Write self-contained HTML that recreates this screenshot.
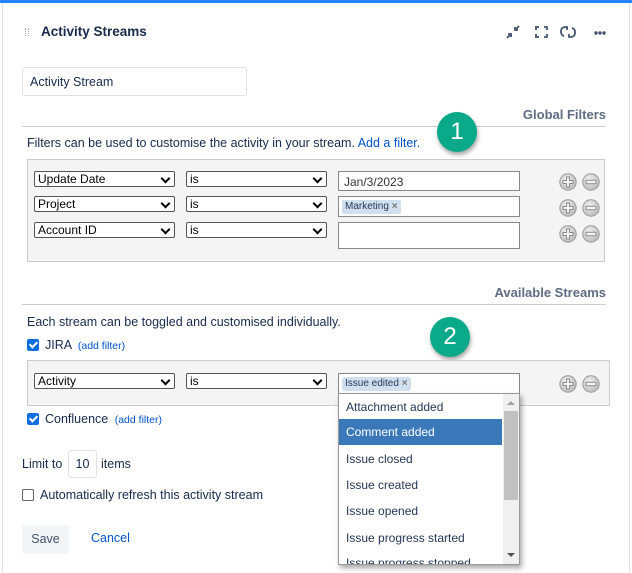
<!DOCTYPE html><html><head><style>
*{box-sizing:border-box;margin:0;padding:0}
body{width:632px;height:573px;background:#fff;font-family:"Liberation Sans",sans-serif;color:#172b4d;position:relative;overflow:hidden;font-size:12px}
.a{position:absolute;white-space:nowrap}
.sel{position:absolute;height:16px;border:1px solid #555;border-radius:2px;background:#fff;font-size:12px;line-height:14px;padding-left:3px;color:#000}
.sel:after{content:"";position:absolute;right:5px;top:3px;width:5px;height:5px;border-right:2px solid #000;border-bottom:2px solid #000;transform:rotate(45deg)}
.inp{position:absolute;border:1px solid #888;background:#fff}
.pm{position:absolute}
.tag{position:absolute;background:#d1e0ef;border-radius:2px;font-size:10px;color:#253858;padding:1px 3px;line-height:12px}
.badge{position:absolute;width:40px;height:40px;border-radius:50%;background:#0aa98a;color:#fff;font-size:24px;text-align:center;line-height:40px;box-shadow:1px 3px 4px rgba(0,0,0,.35)}
.cb{position:absolute;width:12px;height:12px;border-radius:2px;background:#0f6fe0}
.cb:after{content:"";position:absolute;left:4px;top:1px;width:3px;height:6px;border-right:2px solid #fff;border-bottom:2px solid #fff;transform:rotate(45deg)}
.it{position:absolute;left:7px;font-size:12px;color:#253858}
</style></head><body>
<svg width="0" height="0" style="position:absolute"><defs>
<radialGradient id="g" cx=".4" cy=".35" r=".7"><stop offset="0" stop-color="#f2f2f2"/><stop offset="1" stop-color="#b8b8b8"/></radialGradient>
<symbol id="plus" viewBox="0 0 18 18"><circle cx="9" cy="9" r="8.2" fill="url(#g)" stroke="#9a9a9a"/><path d="M7.5 4h3v3.5H14v3h-3.5V14h-3v-3.5H4v-3h3.5z" fill="#f4f4f4" stroke="#8a8a8a"/></symbol>
<symbol id="minus" viewBox="0 0 18 18"><circle cx="9" cy="9" r="8.2" fill="url(#g)" stroke="#9a9a9a"/><rect x="4" y="7.3" width="10" height="3.4" rx="1" fill="#f4f4f4" stroke="#8a8a8a"/></symbol>
</defs></svg>
<div class="a" style="left:0;top:0;width:632px;height:3px;background:#2684ff"></div>
<div class="a" style="left:2px;top:3px;width:1px;height:570px;background:#dfe1e6"></div>
<div class="a" style="left:629px;top:3px;width:1px;height:570px;background:#dfe1e6"></div>
<div class="a" style="left:25px;top:28px;width:4px;height:8px;border-left:1px dotted #aaa;border-right:1px dotted #aaa"></div>
<div class="a" style="left:41px;top:24px;font-size:13.5px;font-weight:bold;color:#172b4d">Activity Streams</div>
<svg class="a" style="left:505px;top:24px" width="104" height="16" viewBox="0 0 104 16" fill="none" stroke="#42526e" stroke-width="1.8">
<path d="M2 14l4-4M3 10h3v3M14 2l-4 4M10 3v3h3"/>
<path d="M31 6V3h3M39 3h3v3M42 10v3h-3M34 13h-3v-3"/>
<path d="M62 3h-2a4 4 0 0 0-4 4v1a4 4 0 0 0 3 4M59 3l3 0 0 3M64 13h2a4 4 0 0 0 4-4V8a4 4 0 0 0-3-4M67 13h-3v-3"/>
<circle cx="91" cy="9" r=".8" fill="#42526e"/><circle cx="95" cy="9" r=".8" fill="#42526e"/><circle cx="99" cy="9" r=".8" fill="#42526e"/>
</svg>
<div class="a" style="left:22px;top:67px;width:225px;height:29px;border:1px solid #dfe1e6;border-radius:3px"></div>
<div class="a" style="left:30px;top:75px;font-size:12.5px">Activity Stream</div>
<div class="a" style="right:26px;top:107px;font-size:13px;font-weight:bold;color:#5e6c84">Global Filters</div>
<div class="a" style="left:22px;top:126px;width:584px;height:1px;background:#ccc"></div>
<div class="a" style="left:27px;top:136px;font-size:12.5px">Filters can be used to customise the activity in your stream. <span style="color:#0052cc">Add a filter.</span></div>
<div class="a" style="left:27px;top:159px;width:578px;height:103px;background:#f4f4f4;border:1px solid #ccc"></div>
<div class="sel" style="left:34px;top:171px;width:141px">Update Date</div>
<div class="sel" style="left:186px;top:171px;width:141px">is</div>
<div class="inp" style="left:338px;top:171px;width:182px;height:20px;font-size:12px;padding:3px 0 0 5px;color:#333">Jan/3/2023</div>
<div class="sel" style="left:34px;top:196px;width:141px">Project</div>
<div class="sel" style="left:186px;top:196px;width:141px">is</div>
<div class="inp" style="left:338px;top:196px;width:182px;height:21px"></div>
<div class="tag" style="left:342px;top:200px">Marketing <b style="color:#777">×</b></div>
<div class="sel" style="left:34px;top:222px;width:141px">Account ID</div>
<div class="sel" style="left:186px;top:222px;width:141px">is</div>
<div class="inp" style="left:338px;top:222px;width:182px;height:27px"></div>
<svg class="pm" style="left:559px;top:173px" width="18" height="18"><use href="#plus"/></svg><svg class="pm" style="left:582px;top:173px" width="18" height="18"><use href="#minus"/></svg>
<svg class="pm" style="left:559px;top:199px" width="18" height="18"><use href="#plus"/></svg><svg class="pm" style="left:582px;top:199px" width="18" height="18"><use href="#minus"/></svg>
<svg class="pm" style="left:559px;top:225px" width="18" height="18"><use href="#plus"/></svg><svg class="pm" style="left:582px;top:225px" width="18" height="18"><use href="#minus"/></svg>
<div class="badge" style="left:437px;top:112px">1</div>
<div class="a" style="right:26px;top:285px;font-size:13px;font-weight:bold;color:#5e6c84">Available Streams</div>
<div class="a" style="left:22px;top:304px;width:584px;height:1px;background:#ccc"></div>
<div class="a" style="left:27px;top:315px;font-size:12.5px">Each stream can be toggled and customised individually.</div>
<div class="cb" style="left:27px;top:339px"></div>
<div class="a" style="left:45px;top:338px;font-size:12.5px">JIRA <span style="color:#0052cc;font-size:10.5px;margin-left:3px">(add filter)</span></div>
<div class="badge" style="left:430px;top:317px">2</div>
<div class="a" style="left:27px;top:360px;width:583px;height:46px;background:#f4f4f4;border:1px solid #ccc"></div>
<div class="sel" style="left:34px;top:373px;width:141px">Activity</div>
<div class="sel" style="left:186px;top:373px;width:141px">is</div>
<div class="inp" style="left:338px;top:373px;width:182px;height:22px"></div>
<div class="tag" style="left:342px;top:377px;border-radius:3px">Issue edited <b style="color:#777">×</b></div>
<svg class="pm" style="left:559px;top:375px" width="18" height="18"><use href="#plus"/></svg><svg class="pm" style="left:582px;top:375px" width="18" height="18"><use href="#minus"/></svg>
<div class="a" style="left:338px;top:393px;width:182px;height:172px;background:#fff;border:1px solid #999;box-shadow:2px 3px 5px rgba(0,0,0,.35);overflow:hidden">
<div class="it" style="top:6px">Attachment added</div>
<div class="a" style="left:0;top:25px;width:163px;height:26px;background:#3b78b9"></div>
<div class="it" style="top:31px;color:#fff">Comment added</div>
<div class="it" style="top:58px">Issue closed</div>
<div class="it" style="top:84px">Issue created</div>
<div class="it" style="top:110px">Issue opened</div>
<div class="it" style="top:137px">Issue progress started</div>
<div class="it" style="top:162px">Issue progress stopped</div>
<div class="a" style="left:164px;top:0;width:16px;height:170px;background:#f0f0f0"></div>
<div class="a" style="left:165px;top:17px;width:14px;height:89px;background:#c1c1c1"></div>
<div class="a" style="left:168px;top:7px;width:0;height:0;border:4px solid transparent;border-bottom-color:#a0a0a0;border-top:0"></div>
<div class="a" style="left:168px;top:159px;width:0;height:0;border:4px solid transparent;border-top-color:#505050;border-bottom:0"></div>
</div>
<div class="cb" style="left:27px;top:413px"></div>
<div class="a" style="left:45px;top:412px;font-size:12.5px">Confluence <span style="color:#0052cc;font-size:10.5px;margin-left:3px">(add filter)</span></div>
<div class="a" style="left:22px;top:457px;font-size:12.5px">Limit to</div>
<div class="a" style="left:68px;top:450px;width:29px;height:28px;border:1px solid #dfe1e6;border-radius:3px;font-size:12.5px;text-align:center;line-height:26px">10</div>
<div class="a" style="left:101px;top:457px;font-size:12.5px">items</div>
<div class="a" style="left:22px;top:489px;width:12px;height:12px;border:1px solid #666;border-radius:2px"></div>
<div class="a" style="left:40px;top:488px;font-size:12.5px">Automatically refresh this activity stream</div>
<div class="a" style="left:22px;top:525px;width:47px;height:29px;background:#f4f5f7;border-radius:3px;font-size:12.5px;text-align:center;line-height:29px;color:#42526e">Save</div>
<div class="a" style="left:91px;top:531px;font-size:12.5px;color:#0052cc">Cancel</div>
</body></html>
